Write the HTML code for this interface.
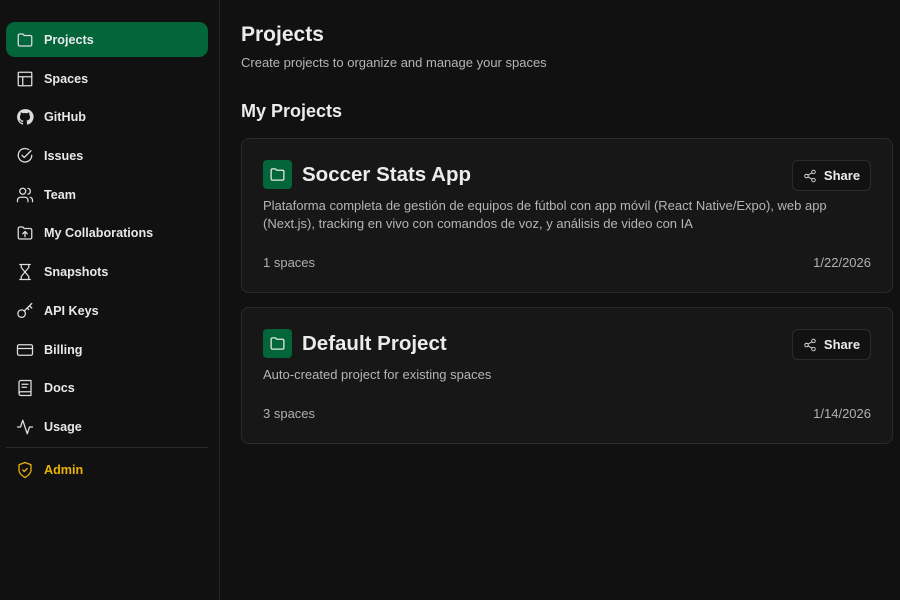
<!DOCTYPE html>
<html><head><style>
*{box-sizing:border-box;margin:0;padding:0}
body{width:900px;height:600px;background:#111111;font-family:"Liberation Sans",sans-serif;color:#ececec;position:relative;overflow:hidden}
.side{position:absolute;left:0;top:0;width:220px;height:600px;border-right:1px solid #262626}
.item{position:absolute;left:6px;width:202px;height:35px;display:flex;align-items:center;padding-left:10px;font-size:12.6px;font-weight:bold;color:#e8e8e8}
.item svg{width:18px;height:18px;margin-right:10px;fill:none;stroke:#ddd;stroke-width:1.7;stroke-linecap:round;stroke-linejoin:round;flex-shrink:0}
.act{background:#03663a;border-radius:9px}
.div{position:absolute;left:6px;width:202px;top:447px;height:1px;background:#2a2a2a}
h1{position:absolute;left:241px;top:23px;font-size:21px;font-weight:bold;white-space:nowrap}
.sub{position:absolute;left:241px;top:55px;font-size:13px;color:#b5b5b5;white-space:nowrap}
h2{position:absolute;left:241px;top:101px;font-size:18px;font-weight:bold;white-space:nowrap}
.card{position:absolute;left:241px;width:652px;background:#171717;border:1px solid #2b2b2b;border-radius:8px}
.ib{position:absolute;left:21px;width:29px;height:29px;background:#03663a;border-radius:4px;display:flex;align-items:center;justify-content:center}
.ib svg{width:17px;height:17px;fill:none;stroke:#e8e8e8;stroke-width:1.8;stroke-linejoin:round}
.ct{position:absolute;left:60px;font-size:20.5px;font-weight:bold;white-space:nowrap}
.share{position:absolute;right:21px;width:79px;height:31px;border:1px solid #2b2b2b;background:#121212;border-radius:6px;display:flex;align-items:center;justify-content:center;font-size:13px;font-weight:bold}
.share svg{width:14px;height:14px;margin-right:7px;fill:none;stroke:#ddd;stroke-width:1.6}
.desc{position:absolute;left:21px;font-size:13px;color:#b5b5b5;line-height:18px;width:600px}
.ft{position:absolute;left:21px;right:21px;font-size:13px;color:#b0b0b0;display:flex;justify-content:space-between}
</style></head><body>
<div class="side">
<div class="item act" style="top:22px"><svg viewBox="0 0 24 24"><path d="M3 6a2 2 0 0 1 2-2h4l2 2h8a2 2 0 0 1 2 2v10a2 2 0 0 1-2 2H5a2 2 0 0 1-2-2z"/></svg>Projects</div>
<div class="item" style="top:61px"><svg viewBox="0 0 24 24"><rect x="3" y="3" width="18" height="18" rx="1"/><path d="M3 9h18M9 9v12"/></svg>Spaces</div>
<div class="item" style="top:99px"><svg viewBox="0 0 24 24" style="stroke:none;fill:#ddd"><path d="M12 1.5A10.5 10.5 0 0 0 8.7 22c.5.1.7-.2.7-.5v-2c-2.9.6-3.5-1.2-3.5-1.2-.5-1.2-1.2-1.5-1.2-1.5-1-.6.1-.6.1-.6 1 .1 1.6 1.1 1.6 1.1.9 1.6 2.5 1.1 3.1.9.1-.7.4-1.1.6-1.4-2.3-.3-4.8-1.2-4.8-5.2 0-1.1.4-2.1 1.1-2.8-.1-.3-.5-1.3.1-2.8 0 0 .9-.3 2.9 1.1a10 10 0 0 1 5.2 0c2-1.4 2.9-1.1 2.9-1.1.6 1.5.2 2.5.1 2.8.7.7 1.1 1.7 1.1 2.8 0 4-2.5 4.9-4.8 5.2.4.3.7 1 .7 2v2.9c0 .3.2.6.7.5A10.5 10.5 0 0 0 12 1.5z"/></svg>GitHub</div>
<div class="item" style="top:138px"><svg viewBox="0 0 24 24"><path d="M21 11a9 9 0 1 1-4-7.5"/><path d="M8 11l3 3 9-9"/></svg>Issues</div>
<div class="item" style="top:177px"><svg viewBox="0 0 24 24"><circle cx="9" cy="7" r="4"/><path d="M2 21v-2a4 4 0 0 1 4-4h6a4 4 0 0 1 4 4v2M16 3.1a4 4 0 0 1 0 7.8M22 21v-2a4 4 0 0 0-3-3.9"/></svg>Team</div>
<div class="item" style="top:215px"><svg viewBox="0 0 24 24"><path d="M3 6a2 2 0 0 1 2-2h4l2 2h8a2 2 0 0 1 2 2v10a2 2 0 0 1-2 2H5a2 2 0 0 1-2-2z"/><path d="M12 17v-6M9 13l3-3 3 3"/></svg>My Collaborations</div>
<div class="item" style="top:254px"><svg viewBox="0 0 24 24"><path d="M5 22h14M5 2h14M17 22v-4l-5-6-5 6v4M7 2v4l5 6 5-6V2"/></svg>Snapshots</div>
<div class="item" style="top:293px"><svg viewBox="0 0 24 24"><circle cx="7.5" cy="15.5" r="5"/><path d="M11 12l10-10M18 5l3 3M15 8l2 2"/></svg>API Keys</div>
<div class="item" style="top:332px"><svg viewBox="0 0 24 24"><rect x="2" y="5" width="20" height="14" rx="2"/><path d="M2 10h20"/></svg>Billing</div>
<div class="item" style="top:370px"><svg viewBox="0 0 24 24"><path d="M4 19.5v-15A2.5 2.5 0 0 1 6.5 2H20v20H6.5a2.5 2.5 0 0 1 0-5H20M8 7h8M8 11h6"/></svg>Docs</div>
<div class="item" style="top:409px"><svg viewBox="0 0 24 24"><path d="M22 12h-4l-3 9L9 3l-3 9H2"/></svg>Usage</div>
<div class="div"></div>
<div class="item" style="top:452px;color:#eab308"><svg viewBox="0 0 24 24" style="stroke:#eab308"><path d="M12 22s8-4 8-10V5l-8-3-8 3v7c0 6 8 10 8 10z"/><path d="M9 12l2 2 4-4"/></svg>Admin</div>
</div>
<h1>Projects</h1>
<div class="sub">Create projects to organize and manage your spaces</div>
<h2>My Projects</h2>
<div class="card" style="top:138px;height:155px">
<div class="ib" style="top:21px"><svg viewBox="0 0 24 24"><path d="M3 6a2 2 0 0 1 2-2h4l2 2h8a2 2 0 0 1 2 2v10a2 2 0 0 1-2 2H5a2 2 0 0 1-2-2z"/></svg></div>
<div class="ct" style="top:24px">Soccer Stats App</div>
<div class="share" style="top:21px"><svg viewBox="0 0 24 24"><circle cx="18" cy="5" r="3"/><circle cx="6" cy="12" r="3"/><circle cx="18" cy="19" r="3"/><path d="M8.6 13.5l6.8 4M15.4 6.5l-6.8 4"/></svg>Share</div>
<div class="desc" style="top:58px">Plataforma completa de gestión de equipos de fútbol con app móvil (React Native/Expo), web app (Next.js), tracking en vivo con comandos de voz, y análisis de video con IA</div>
<div class="ft" style="top:116px"><span>1 spaces</span><span>1/22/2026</span></div>
</div>
<div class="card" style="top:307px;height:137px">
<div class="ib" style="top:21px"><svg viewBox="0 0 24 24"><path d="M3 6a2 2 0 0 1 2-2h4l2 2h8a2 2 0 0 1 2 2v10a2 2 0 0 1-2 2H5a2 2 0 0 1-2-2z"/></svg></div>
<div class="ct" style="top:24px">Default Project</div>
<div class="share" style="top:21px"><svg viewBox="0 0 24 24"><circle cx="18" cy="5" r="3"/><circle cx="6" cy="12" r="3"/><circle cx="18" cy="19" r="3"/><path d="M8.6 13.5l6.8 4M15.4 6.5l-6.8 4"/></svg>Share</div>
<div class="desc" style="top:58px">Auto-created project for existing spaces</div>
<div class="ft" style="top:98px"><span>3 spaces</span><span>1/14/2026</span></div>
</div>
</body></html>
